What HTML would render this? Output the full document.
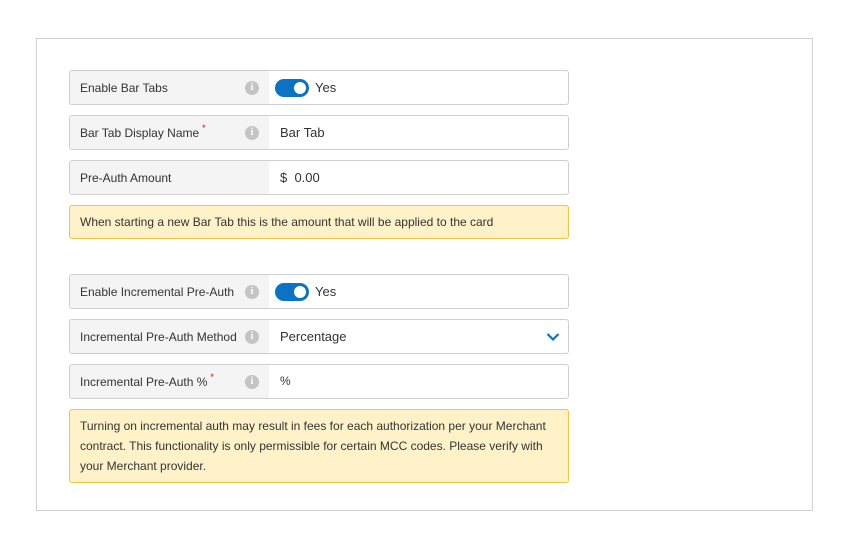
<!DOCTYPE html>
<html><head><style>
body{margin:0;width:850px;height:534px;background:#fff;font-family:"Liberation Sans",sans-serif;color:#333;position:relative}
.box{position:absolute;left:36px;top:38px;width:775px;height:471px;border:1px solid #d0d0d0}
.row{position:absolute;left:69px;width:498px;height:33px;border:1px solid #cfcfcf;border-radius:3px;background:#fff;overflow:hidden}
.lab{position:absolute;left:0;top:0;width:199px;height:33px;background:#f4f4f4;font-size:12px;line-height:34px;padding-left:10px;box-sizing:border-box}
.lab sup{color:#d0021b;font-size:9px;vertical-align:baseline;position:relative;top:-6px;line-height:0;margin-left:3px}
.info{position:absolute;left:175px;top:10px;width:14px;height:14px;border-radius:50%;background:#c4c4c4;color:#fff;font-size:10px;line-height:14px;text-align:center;font-weight:bold;font-family:"Liberation Serif",serif}
.val{position:absolute;left:210px;top:0;font-size:13px;line-height:33px}
.tog{position:absolute;left:205px;top:8px;width:34px;height:18px;border-radius:9px;background:#0a73c4}
.tog:after{content:"";position:absolute;right:3px;top:3px;width:12px;height:12px;border-radius:50%;background:#fff}
.yes{left:245px}
.note{position:absolute;left:69px;width:478px;border:1px solid #f5c242;border-radius:3px;background:#fff2c9;font-size:12px;line-height:20px;padding:6px 10px;color:#333;box-sizing:content-box}
</style></head><body>
<div class="box"></div>
<div class="row" style="top:70px"><div class="lab">Enable Bar Tabs<span class="info">i</span></div><div class="tog"></div><div class="val yes">Yes</div></div>
<div class="row" style="top:115px"><div class="lab">Bar Tab Display Name<sup>*</sup><span class="info">i</span></div><div class="val">Bar Tab</div></div>
<div class="row" style="top:160px"><div class="lab">Pre-Auth Amount</div><div class="val">$&nbsp; 0.00</div></div>
<div class="note" style="top:205px;height:20px;padding:6px 10px 6px 10px;width:478px">When starting a new Bar Tab this is the amount that will be applied to the card</div>
<div class="row" style="top:274px"><div class="lab">Enable Incremental Pre-Auth<span class="info">i</span></div><div class="tog"></div><div class="val yes">Yes</div></div>
<div class="row" style="top:319px"><div class="lab">Incremental Pre-Auth Method<span class="info">i</span></div><div class="val">Percentage</div>
<svg style="position:absolute;left:476px;top:12px" width="14" height="10" viewBox="0 0 14 10"><path d="M1.5 2 L7 7.5 L12.5 2" fill="none" stroke="#0a73c4" stroke-width="2.2"/></svg></div>
<div class="row" style="top:364px"><div class="lab">Incremental Pre-Auth %<sup>*</sup><span class="info">i</span></div><div class="val" style="font-size:12px">%</div></div>
<div class="note" style="top:409px;height:60px;padding-top:6px">Turning on incremental auth may result in fees for each authorization per your Merchant contract. This functionality is only permissible for certain MCC codes. Please verify with your Merchant provider.</div>
</body></html>
